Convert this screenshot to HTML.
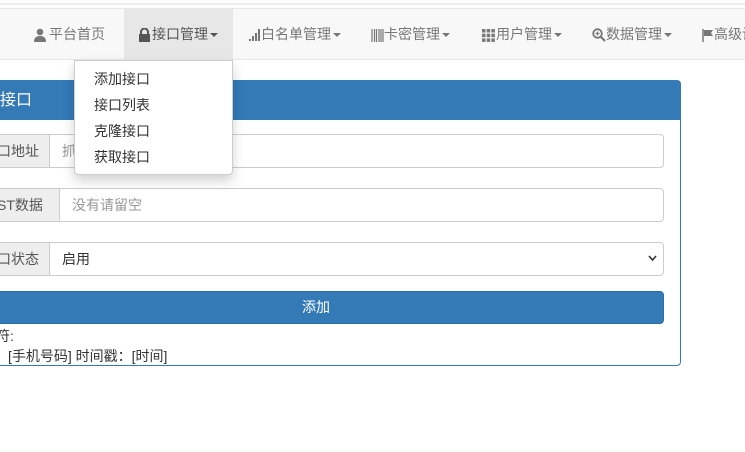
<!DOCTYPE html>
<html><head><meta charset="utf-8"><style>
*{box-sizing:border-box;margin:0;padding:0}
body{width:745px;height:452px;overflow:hidden;background:#fff;font-family:"Liberation Sans","Noto Sans CJK SC",sans-serif;font-size:14px;color:#333;position:relative}
.topline{position:absolute;left:0;top:3px;width:745px;height:2px;background:#eee}
.nav{position:absolute;left:0;top:8px;width:745px;height:52px;background:#f8f8f8;border-top:1px solid #e7e7e7;border-bottom:1px solid #e7e7e7}
.it{position:absolute;top:0;height:50px;line-height:50px;color:#777;white-space:nowrap}
.act{background:#e7e7e7;color:#555}
.car{display:inline-block;width:0;height:0;border-left:4px solid transparent;border-right:4px solid transparent;border-top:4px solid #777;vertical-align:middle;margin-left:2px}
.ic{display:inline-block;vertical-align:middle;margin-right:2px}
.dd{position:absolute;left:74px;top:60px;width:159px;height:115px;background:#fff;border:1px solid #ccc;border-radius:0 0 4px 4px;box-shadow:0 6px 12px rgba(0,0,0,.175);z-index:5}
.dd div{position:absolute;left:19px;color:#333;font-size:14px}
.panel{position:absolute;left:-5px;top:80px;width:686px;height:286px;border:1px solid #337ab7;border-radius:4px;background:#fff}
.ph{height:39px;background:#337ab7;color:#fff;font-size:16px;line-height:39px;padding-left:4px}
.row{position:absolute;left:0;width:668px;height:34px;border:1px solid #ccc;border-radius:4px;display:flex}
.ad{background:#eee;border-right:1px solid #ccc;line-height:32px;color:#555}
.in{line-height:32px;padding-left:12px;color:#999;flex:1}
.btn{position:absolute;left:-28px;top:210px;width:696px;height:33px;background:#337ab7;border:1px solid #2e6da4;border-radius:4px;color:#fff;text-align:center;line-height:31px}
.tx{position:absolute;left:0;font-size:14px;color:#333}
</style></head><body>
<div class="topline"></div>
<div class="nav">
<div class="it" style="left:33px"><svg class="ic" width="14" height="14" viewBox="0 0 14 14"><circle cx="7" cy="4" r="3.3" fill="#777"/><path d="M1 14c0-5 3-6 6-6s6 1 6 6z" fill="#777"/></svg>平台首页</div>
<div class="it act" style="left:124px;width:109px;padding-left:14px"><svg class="ic" width="13" height="14" viewBox="0 0 13 14" style="margin-right:1px"><path d="M3 6V4a3.5 3.5 0 0 1 7 0v2" stroke="#555" stroke-width="2" fill="none"/><rect x="1" y="6" width="11" height="8" fill="#555"/></svg>接口管理<span class="car" style="border-top-color:#555"></span></div>
<div class="it" style="left:249px"><svg class="ic" width="12" height="12" viewBox="0 0 12 12" style="margin-right:0"><rect x="0" y="10" width="2" height="2" fill="#777"/><rect x="3" y="7" width="2" height="5" fill="#777"/><rect x="6" y="4" width="2" height="8" fill="#777"/><rect x="9" y="0" width="2" height="12" fill="#777"/></svg>白名单管理<span class="car"></span></div>
<div class="it" style="left:371px"><svg class="ic" width="13" height="13" viewBox="0 0 13 13" style="margin-right:0"><path d="M1 0v13M3.5 0v13M5.5 0v13M8 0v13M10 0v13M12 0v13" stroke="#777" stroke-width="1.2"/></svg>卡密管理<span class="car"></span></div>
<div class="it" style="left:482px"><svg class="ic" width="13" height="13" viewBox="0 0 13 13" style="margin-right:1px"><g fill="#777"><rect x="0" y="0" width="3.5" height="3.5"/><rect x="4.7" y="0" width="3.5" height="3.5"/><rect x="9.4" y="0" width="3.5" height="3.5"/><rect x="0" y="4.7" width="3.5" height="3.5"/><rect x="4.7" y="4.7" width="3.5" height="3.5"/><rect x="9.4" y="4.7" width="3.5" height="3.5"/><rect x="0" y="9.4" width="3.5" height="3.5"/><rect x="4.7" y="9.4" width="3.5" height="3.5"/><rect x="9.4" y="9.4" width="3.5" height="3.5"/></g></svg>用户管理<span class="car"></span></div>
<div class="it" style="left:592px"><svg class="ic" width="14" height="14" viewBox="0 0 14 14" style="margin-right:0"><circle cx="5.5" cy="5.5" r="4.3" stroke="#777" stroke-width="1.8" fill="none"/><path d="M8.5 8.5l4.5 4.5" stroke="#777" stroke-width="2.2"/><path d="M5.5 3.5v4M3.5 5.5h4" stroke="#777" stroke-width="1.3"/></svg>数据管理<span class="car"></span></div>
<div class="it" style="left:702px"><svg class="ic" width="12" height="13" viewBox="0 0 12 13" style="margin-right:0"><path d="M1 0v13" stroke="#777" stroke-width="1.5"/><path d="M2 1h9l-2 3 2 3H2z" fill="#777"/></svg>高级设置</div>
</div>
<div class="dd">
<div style="top:8px">添加接口</div>
<div style="top:34px">接口列表</div>
<div style="top:60px">克隆接口</div>
<div style="top:86px">获取接口</div>
</div>
<div class="panel">
<div class="ph">接口</div>
<div class="row" style="top:53px"><div class="ad" style="width:53px">口地址</div><div class="in">抓</div></div>
<div class="row" style="top:107px"><div class="ad" style="width:63px">ST数据</div><div class="in">没有请留空</div></div>
<div class="row" style="top:161px"><div class="ad" style="width:53px">口状态</div><div class="in" style="color:#333;position:relative">启用<svg style="position:absolute;right:6px;top:12px" width="9" height="7" viewBox="0 0 9 7"><path d="M1 1l3.5 4 3.5-4" stroke="#333" stroke-width="1.6" fill="none"/></svg></div></div>
<div class="btn">添加</div>
<div class="tx" style="top:245px">符:</div>
<div class="tx" style="top:265px;left:12px">[手机号码] 时间戳：[时间]</div>
</div>
</body></html>
